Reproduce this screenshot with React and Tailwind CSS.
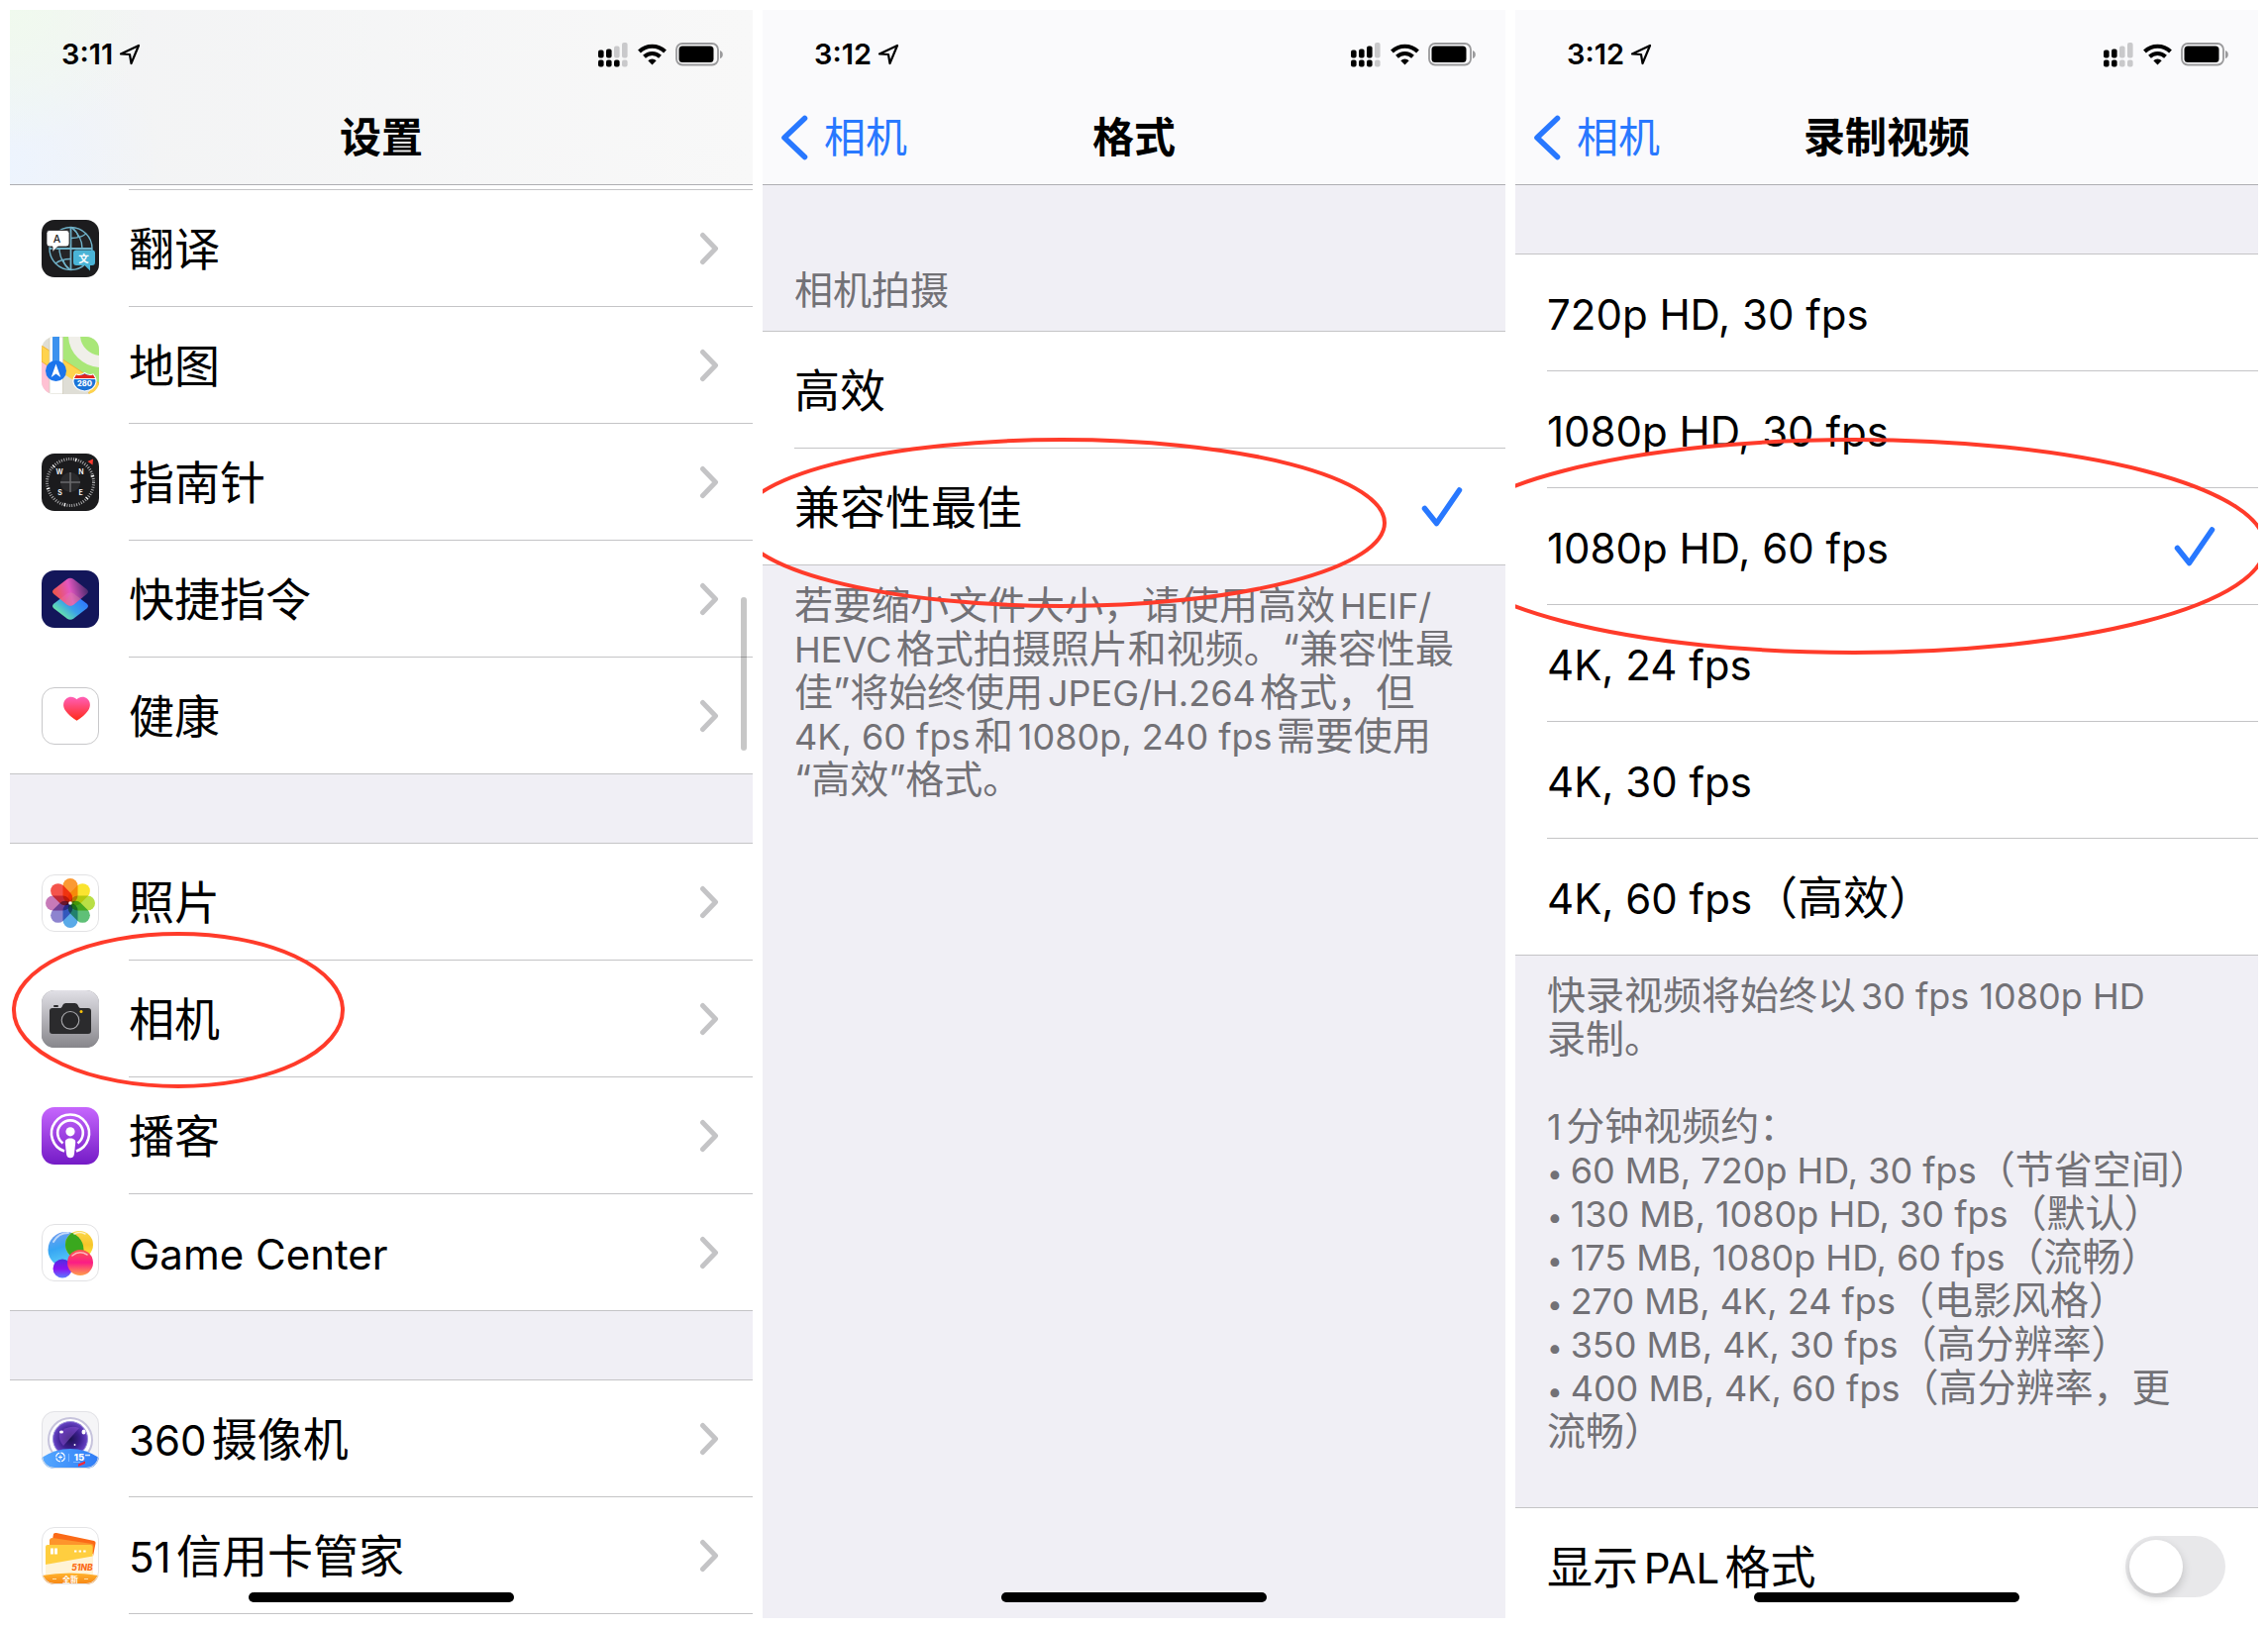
import React, { useId } from "react";
import clsx from "clsx";

/* ---------- app icons (58 x 58) ---------- */

function IconBase({ children, bg = "#ffffff", border }) {
  const id = useId();
  return (
    <svg viewBox="0 0 58 58" className="mt-[2px] h-[58px] w-[58px] shrink-0" aria-hidden="true">
      <defs>
        <clipPath id={id}>
          <rect width="58" height="58" rx="13" />
        </clipPath>
      </defs>
      <g clipPath={`url(#${id})`}>
        <rect width="58" height="58" fill={bg} />
        {children}
      </g>
      {border && <rect x="0.5" y="0.5" width="57" height="57" rx="12.5" fill="none" stroke={border} />}
    </svg>
  );
}

function TranslateIcon() {
  return (
    <IconBase bg="#1c1c1e">
      <circle cx="29.5" cy="29" r="21.5" fill="#242426" />
      <g fill="none" stroke="#6fb2c9" strokeWidth="1.4">
        <circle cx="29.5" cy="29" r="21.5" />
        <path d="M29.5 7.5v43M8 29h43" strokeWidth="1.8" />
        <path d="M30 7.5q11 9 11 21.500M29 50.500q-11-9-11-21.500" />
        <path d="M30 18.500q9 0 15-4.500M29 39.500q-9 0-15 4.500M31 8q5 4 6 9M28 50q-5-4-6-9" />
      </g>
      <path d="M8 10.500h17a3 3 0 0 1 3 3v10.500a3 3 0 0 1-3 3h-8.500l-5.500 5.500v-5.500h-3a3 3 0 0 1-3-3v-10.500a3 3 0 0 1 3-3z" fill="#fff" stroke="#1c1c1e" strokeWidth="0.800" />
      <path d="M35 30.500h16a3 3 0 0 1 3 3v9.500a3 3 0 0 1-3 3h-2v5.500l-5.500-5.500h-8.500a3 3 0 0 1-3-3v-9.500a3 3 0 0 1 3-3z" fill="#4ab4d6" />
      <text x="15.500" y="22.800" fontSize="10.500" textAnchor="middle" fill="#222" fontFamily="Inter, sans-serif" fontWeight="500">A</text>
      <text x="42.500" y="42.500" fontSize="10.500" textAnchor="middle" fill="#fff" fontFamily="Noto Sans CJK SC, sans-serif" fontWeight="700">文</text>
    </IconBase>
  );
}

function MapsIcon() {
  return (
    <IconBase bg="#dfded6">
      <path d="M21 0h37v47L21 24z" fill="#a9e778" />
      <circle cx="60" cy="-2" r="27" fill="none" stroke="#f0efe9" strokeWidth="12" />
      <path d="M0 25l8 5v28h-8z" fill="#ffc1d3" />
      <path d="M0 9l58 38v16l-14-8L0 25z" fill="#ffd34d" stroke="#f2b233" strokeWidth="1" />
      <path d="M21 37l28 17-3 4H21z" fill="#dfded6" />
      <path d="M8 0h13.500v58h-13.500z" fill="#fff" stroke="#cfcdbd" strokeWidth="0.800" />
      <path d="M11 0h7v28h-7z" fill="#3c92ee" />
      <circle cx="14.500" cy="34.500" r="10.500" fill="#1b74ec" />
      <path d="M14.500 27.500l4.800 13.500-4.800-3.500-4.800 3.500z" fill="#fff" />
      <path d="M35 38q4.500 1.500 8.500-1.500 4 3 8.500 1.500 3.500 4 3 8-1.500 8-11.500 9-10-1-11.500-9-.5-4 3-8z" fill="#1b74d8" stroke="#fff" strokeWidth="1.200" />
      <path d="M35 38.500q4.500 1.500 8.500-1 4 2.500 8.500 1l2 3.500H33z" fill="#e2251f" />
      <path d="M33 42.500h21" stroke="#fff" strokeWidth="1" />
      <text x="43.500" y="50" fontSize="7.500" textAnchor="middle" fill="#fff" fontFamily="Inter, sans-serif" fontWeight="800">280</text>
    </IconBase>
  );
}

function CompassIcon() {
  return (
    <IconBase bg="#1b1b1d">
      <circle cx="29" cy="29" r="23.500" fill="none" stroke="#b9b9bb" strokeWidth="3" strokeDasharray="0.900 1.560" />
      <g stroke="#fff" strokeWidth="1.200">
        <path d="M29 4v3.500" transform="rotate(14 29 29)" />
        <path d="M29 4v3.500" transform="rotate(74 29 29)" />
        <path d="M29 4v3.500" transform="rotate(134 29 29)" />
        <path d="M29 4v3.500" transform="rotate(194 29 29)" />
        <path d="M29 4v3.500" transform="rotate(254 29 29)" />
        <path d="M29 4v3.500" transform="rotate(314 29 29)" />
      </g>
      <circle cx="29" cy="29" r="10" fill="#2a2a2c" />
      <path d="M29 19v20M19 29h20" stroke="#6a6a6c" strokeWidth="1.600" />
      <path d="M46.500 8l5.500-2.500-.5 6z" fill="#ff3b30" />
      <g fill="#fff" fontSize="7" fontWeight="600" fontFamily="Inter, sans-serif" textAnchor="middle">
        <text x="18" y="21.200">W</text>
        <text x="40" y="21.200">N</text>
        <text x="18.500" y="42">S</text>
        <text x="39.500" y="42">E</text>
      </g>
    </IconBase>
  );
}

function ShortcutsIcon() {
  const a = useId();
  const b = useId();
  return (
    <IconBase bg="#13165a">
      <defs>
        <linearGradient id={a} x1="0" y1="0.600" x2="1" y2="0.400">
          <stop offset="0" stopColor="#ff5a3c" />
          <stop offset="0.500" stopColor="#f45bc9" />
          <stop offset="1" stopColor="#4a2a6c" />
        </linearGradient>
        <linearGradient id={b} x1="0.200" y1="0.900" x2="0.900" y2="0.300">
          <stop offset="0" stopColor="#6ff0a0" />
          <stop offset="0.500" stopColor="#3aa0e8" />
          <stop offset="1" stopColor="#2f78ff" />
        </linearGradient>
      </defs>
      <path d="M25.500 23.500q3.500-2 7 0l13 10q3 2.500 0 5l-13 10q-3.500 2.500-7 0l-13-10q-3-2.500 0-5z" fill={`url(#${b})`} />
      <path d="M25.500 9q3.500-2.500 7 0l13 10q3 2.500 0 5l-13 10.500q-3.500 2.500-7 0l-13-10.500q-3-2.500 0-5z" fill={`url(#${a})`} fillOpacity="0.920" />
      <path d="M29 22.300q2 0 3.500 1.200l7 5.300-7 5.700q-3.500 2.500-7 0l-2-1.500z" fill="#d8808a" fillOpacity="0.350" />
    </IconBase>
  );
}

function HealthIcon() {
  const id = useId();
  return (
    <IconBase border="#c8c8ca">
      <defs>
        <linearGradient id={id} x1="0" y1="0" x2="0" y2="1">
          <stop offset="0" stopColor="#ff5fb8" />
          <stop offset="1" stopColor="#ff2a17" />
        </linearGradient>
      </defs>
      <path d="M35.500 12.200c2.500-3 7.500-3.500 10.500-.8 3.500 3 3.800 8 1 12-2.500 3.800-7 7.500-11.500 10.300-4.500-2.800-9-6.500-11.500-10.300-2.800-4-2.500-9 1-12 3-2.700 8-2.200 10.500.8z" fill={`url(#${id})`} />
    </IconBase>
  );
}

const petals = ["#fb9a33", "#fae42f", "#b9df45", "#5fc077", "#5aaae8", "#8d84cf", "#c77ab8", "#f4544b"];

function PhotosIcon() {
  return (
    <IconBase border="#e2e2e4">
      {petals.map((color, i) => (
        <rect key={color} x="21.500" y="4" width="15" height="25" rx="7.500" fill={color} transform={`rotate(${i * 45} 29 29)`} className="mix-blend-multiply" />
      ))}
      <circle cx="29" cy="29" r="1.800" fill="#fff" />
    </IconBase>
  );
}

function CameraIcon() {
  const id = useId();
  return (
    <IconBase bg="#8d8c91">
      <defs>
        <linearGradient id={id} x1="0" y1="0" x2="0" y2="1">
          <stop offset="0" stopColor="#e1e0e6" />
          <stop offset="1" stopColor="#87868b" />
        </linearGradient>
      </defs>
      <rect width="58" height="58" fill={`url(#${id})`} />
      <path d="M11 18h7.500q1.500 0 2.200-1.500l.8-1.800q.9-1.700 3-1.700h9q2.100 0 3 1.700l.8 1.800q.7 1.500 2.200 1.500H47q3 0 3 3v20q0 3-3 3H11q-3 0-3-3V21q0-3 3-3z" fill="#2b2b2d" />
      <rect x="12" y="15" width="5" height="2" rx="1" fill="#2b2b2d" />
      <circle cx="29" cy="30.300" r="8.800" fill="#262628" stroke="#a9a9ad" strokeWidth="1.100" />
      <circle cx="40" cy="21.500" r="1.500" fill="#ffc60a" />
    </IconBase>
  );
}

function PodcastsIcon() {
  const id = useId();
  return (
    <IconBase>
      <defs>
        <linearGradient id={id} x1="0" y1="0" x2="0" y2="1">
          <stop offset="0" stopColor="#c666fd" />
          <stop offset="1" stopColor="#741bc6" />
        </linearGradient>
      </defs>
      <rect width="58" height="58" fill={`url(#${id})`} />
      <g fill="none" stroke="#fff" strokeWidth="2.600">
        <path d="M23 44.500a19 19 0 1 1 12 0" />
        <path d="M21.500 36.500a12.800 12.800 0 1 1 15 0" />
      </g>
      <circle cx="29" cy="24.800" r="4.600" fill="#fff" />
      <path d="M29 31.500c3.500 0 5.500 1.500 5.200 4.500l-1.200 11c-.4 3-1.500 4.200-4 4.200s-3.600-1.200-4-4.200l-1.200-11c-.3-3 1.700-4.500 5.200-4.500z" fill="#fff" />
    </IconBase>
  );
}

function GameCenterIcon() {
  const id = useId();
  return (
    <IconBase border="#e2e2e4">
      <defs>
        <linearGradient id={id + "b"} x1="0" y1="0" x2="0.300" y2="1">
          <stop offset="0" stopColor="#7d9cf0" />
          <stop offset="0.500" stopColor="#37a5f3" />
          <stop offset="1" stopColor="#5cd0f8" />
        </linearGradient>
        <linearGradient id={id + "y"} x1="0" y1="0" x2="0" y2="1">
          <stop offset="0" stopColor="#fbd84a" />
          <stop offset="0.500" stopColor="#f7c52a" />
          <stop offset="1" stopColor="#fdf03c" />
        </linearGradient>
        <linearGradient id={id + "p"} x1="0" y1="0" x2="0" y2="1">
          <stop offset="0" stopColor="#fb5a4a" />
          <stop offset="0.500" stopColor="#fb1c86" />
          <stop offset="1" stopColor="#ffa04a" />
        </linearGradient>
        <linearGradient id={id + "v"} x1="0" y1="0" x2="0" y2="1">
          <stop offset="0" stopColor="#4a2fe0" />
          <stop offset="0.500" stopColor="#8a12f0" />
          <stop offset="1" stopColor="#5a7cff" />
        </linearGradient>
        <clipPath id={id + "c"}>
          <circle cx="24.500" cy="26" r="18" />
        </clipPath>
      </defs>
      <circle cx="24.500" cy="26" r="18" fill={`url(#${id}b)`} />
      <circle cx="38" cy="21" r="14" fill={`url(#${id}y)`} />
      <circle cx="38" cy="21" r="14" fill="#3aa81e" clipPath={`url(#${id}c)`} />
      <circle cx="21" cy="45" r="9.500" fill={`url(#${id}v)`} />
      <circle cx="39" cy="39" r="13" fill={`url(#${id}p)`} />
      <path d="M12 18q5-9 15-9" stroke="#fff" strokeOpacity="0.600" strokeWidth="2" fill="none" strokeLinecap="round" />
      <path d="M31 32q7-6 15-1" stroke="#fff" strokeOpacity="0.600" strokeWidth="1.500" fill="none" strokeLinecap="round" />
      <path d="M33 10q5-3 11 0" stroke="#fff" strokeOpacity="0.700" strokeWidth="1.500" fill="none" strokeLinecap="round" />
    </IconBase>
  );
}

function Camera360Icon() {
  const id = useId();
  return (
    <IconBase bg="#f5f5f7" border="#e2e2e6">
      <defs>
        <radialGradient id={id}>
          <stop offset="0" stopColor="#1c1150" />
          <stop offset="0.550" stopColor="#3c1f8e" />
          <stop offset="1" stopColor="#6a45c8" />
        </radialGradient>
        <linearGradient id={id + "w"} x1="0" y1="0" x2="1" y2="0">
          <stop offset="0" stopColor="#55a8ff" />
          <stop offset="1" stopColor="#2f7cf6" />
        </linearGradient>
      </defs>
      <circle cx="29" cy="29" r="22" fill="#fff" stroke="#c6c3dc" strokeWidth="2" />
      <circle cx="29" cy="28" r="17.500" fill={`url(#${id})`} stroke="#9a90d8" strokeWidth="1" />
      <path d="M18 22q9-9 20-5l-16 18q-5-5-4-13z" fill="#9a5ce0" fillOpacity="0.450" />
      <ellipse cx="20" cy="21" rx="2" ry="1.500" fill="#fff" />
      <ellipse cx="42.500" cy="21" rx="2" ry="2.500" fill="#fff" />
      <circle cx="33.500" cy="34" r="0.900" fill="#fff" />
      <path d="M0 47q14-9 29-9t29 9v11H0z" fill={`url(#${id}w)`} />
      <circle cx="19" cy="46.500" r="4.300" fill="none" stroke="#fff" strokeWidth="1.200" strokeDasharray="5.500 1.200" />
      <path d="M17 46.500h4M19 44.500v4" stroke="#fff" strokeWidth="1" />
      <path d="M27.500 43v8M32 51.500h7" stroke="#8fc0ff" strokeWidth="0.800" />
      <text x="38" y="50" fontSize="9.500" textAnchor="middle" fill="#fff" fontFamily="Inter, sans-serif" fontWeight="800">15</text>
      <path d="M44 44.500h5" stroke="#d5e6ff" strokeWidth="1.400" />
      <path d="M37 53.500l7-3v2.500l-7 3z" fill="#f2283a" />
    </IconBase>
  );
}

function Card51Icon() {
  const id = useId();
  return (
    <IconBase border="#e4e4e6">
      <defs>
        <linearGradient id={id} x1="0" y1="0" x2="0" y2="1">
          <stop offset="0" stopColor="#ffb52e" />
          <stop offset="1" stopColor="#f78413" />
        </linearGradient>
      </defs>
      <path d="M12 7q1-1.500 3-1l38 8q2 .5 1.500 2.500l-2.500 13L10 18z" fill="#fb6a17" />
      <path d="M8 13q.5-2 3-2l40 6q2 .5 1.500 2.500L50 36 8 34z" fill="#fd952c" />
      <path d="M4 38l48-11v22H4z" fill="#fff3d6" />
      <path d="M6 18h43q2.500 0 2.500 2.500v9L4 38V20q0-2 2-2z" fill="#ffce3f" />
      <path d="M9 21.500h3v6h-3zM13 21.500h3v6h-3z" fill="#fff" />
      <path d="M33 24.500h12" stroke="#fff" strokeWidth="2.200" strokeDasharray="2.400 2.200" />
      <text x="41" y="43.500" fontSize="8.500" fontStyle="italic" textAnchor="middle" fill="#fb6a17" fontFamily="Inter, sans-serif" fontWeight="800">51NB</text>
      <path d="M0 49q29-5 58 0v9H0z" fill={`url(#${id})`} />
      <text x="29" y="55.500" fontSize="8" textAnchor="middle" fill="#fff" fontFamily="Noto Sans CJK SC, sans-serif" fontWeight="700">全新</text>
      <path d="M11 52.500h4M43 52.500h4" stroke="#ffe0a8" strokeWidth="1" />
    </IconBase>
  );
}

/* ---------- glyphs ---------- */

function ChevronRight() {
  return (
    <svg viewBox="0 0 20 34" className="h-[34px] w-[20px] shrink-0" aria-hidden="true">
      <path d="M3.500 3.500L16.500 17L3.500 30.500" fill="none" stroke="#c4c4c6" strokeWidth="5" strokeLinecap="round" strokeLinejoin="round" />
    </svg>
  );
}

function ChevronLeft() {
  return (
    <svg viewBox="0 0 28 46" className="h-[46px] w-[28px] shrink-0" aria-hidden="true">
      <path d="M24.500 3.500L4 23L24.500 42.500" fill="none" stroke="#2878ff" strokeWidth="5.600" strokeLinecap="round" strokeLinejoin="round" />
    </svg>
  );
}

function CheckMark() {
  return (
    <svg viewBox="0 0 42 40" className="hidden h-[40px] w-[42px] shrink-0 peer-checked:block" aria-hidden="true">
      <path d="M3.500 21.500L15.500 36.500L38.500 3" fill="none" stroke="#2878ff" strokeWidth="5.500" strokeLinecap="round" strokeLinejoin="round" />
    </svg>
  );
}

function LocationArrow() {
  return (
    <svg viewBox="0 0 22 22" className="h-[22px] w-[22px]" aria-hidden="true">
      <path d="M2 10.500L20 2L12.500 20L11 11Z" fill="none" stroke="#000" strokeWidth="2.200" strokeLinejoin="round" />
    </svg>
  );
}

// top / bottom = number of filled bars per SIM
function Signal({ top, bottom }) {
  return (
    <svg viewBox="0 0 31 25" className="h-[25px] w-[31px]" aria-hidden="true">
      {[0, 1, 4, 7.5].map((rise, i) => (
        <React.Fragment key={i}>
          <rect x={i * 8} y={7.5 - rise} width="5.600" height={8 + rise} rx="2" fill={i < top ? "#000" : "#c9c9cb"} />
          <rect x={i * 8} y="17.500" width="5.600" height="7" rx="2" fill={i < bottom ? "#000" : "#c9c9cb"} />
        </React.Fragment>
      ))}
    </svg>
  );
}

function Wifi() {
  return (
    <svg viewBox="0 0 29 22" className="h-[22px] w-[29px]" aria-hidden="true">
      <g fill="none" stroke="#000" strokeWidth="4">
        <path d="M1.500 8a18.500 18.500 0 0 1 26 0" />
        <path d="M6.500 13.300a11.500 11.500 0 0 1 16 0" />
      </g>
      <path d="M10.300 17.300a6 6 0 0 1 8.400 0L14.500 21.500z" fill="#000" />
    </svg>
  );
}

function Battery() {
  return (
    <svg viewBox="0 0 48 24" className="h-[24px] w-[48px]" aria-hidden="true">
      <rect x="1" y="1" width="42" height="21.500" rx="6" fill="none" stroke="#9a9a9c" strokeWidth="1.800" />
      <rect x="3.500" y="3.500" width="35" height="16.500" rx="3.500" fill="#000" />
      <path d="M45 8q2.800 1 2.800 4t-2.800 4z" fill="#9a9a9c" />
    </svg>
  );
}

/* ---------- shared pieces ---------- */

// Latin runs are set a little smaller than the Chinese text around them
function Mixed({ text, latin = "text-[42px]" }) {
  return text.split(/([\x20-\x7e]+)/).map((part, i) =>
    i % 2 ? (
      <span key={i} className={clsx("leading-none", latin)}>
        {part}
      </span>
    ) : (
      part
    )
  );
}

function Lines({ lines, bullet }) {
  return lines.map((line, i) => (
    <span key={line} className="block">
      {bullet && i === 0 && <span className="text-[28px] leading-none">• </span>}
      <Mixed text={line} latin="text-[36px]" />
    </span>
  ));
}

function Screen({ children }) {
  return (
    <section className="relative flex min-w-0 flex-1 flex-col overflow-hidden bg-[#f0eff5]">
      {children}
      <div className="absolute bottom-[16px] left-1/2 h-[10px] w-[268px] -translate-x-1/2 rounded-full bg-black" />
    </section>
  );
}

function Header({ time, title, back, signal, className }) {
  return (
    <header className={clsx("shrink-0 border-b border-[#aeaeb2] pb-[8px]", className)}>
      <div className="flex h-[90px] items-center justify-between pr-[30px] pl-[52px]">
        <div className="flex items-center gap-[6px]">
          <span className="text-[29px] font-semibold">{time}</span>
          <LocationArrow />
        </div>
        <div className="flex items-center gap-[9px]">
          <Signal top={signal[0]} bottom={signal[1]} />
          <Wifi />
          <Battery />
        </div>
      </div>
      <div className="grid h-[78px] grid-cols-3 items-center text-[42px]">
        <div>
          {back && (
            <a href="#camera" className="flex items-center gap-[16px] pl-[18px] text-[#2878ff]">
              <ChevronLeft />
              {back}
            </a>
          )}
        </div>
        <h1 className="text-center font-bold whitespace-nowrap">{title}</h1>
      </div>
    </header>
  );
}

function SettingRow({ icon, label, first, children }) {
  return (
    <a href="#row" className={clsx("relative flex h-[118px] shrink-0 items-center gap-[30px] bg-white pl-[32px]", first && "border-t border-[#c4c4c6]")}>
      {icon}
      <span className={clsx("flex h-full flex-1 items-center justify-between pr-[34px]", !first && "border-t border-[#c4c4c6]")}>
        <span>
          <Mixed text={label} />
        </span>
        <ChevronRight />
      </span>
      {children}
    </a>
  );
}

function OptionRow({ name, label, first, checked, children }) {
  return (
    <label className={clsx("relative flex h-[118px] shrink-0 bg-white pl-[32px]", first && "border-t border-[#c4c4c6]")}>
      <span className={clsx("flex flex-1 items-center pr-[43px]", !first && "border-t border-[#c4c4c6]")}>
        <input type="radio" name={name} defaultChecked={checked} className="peer appearance-none" />
        <span className="flex-1">
          <Mixed text={label} />
        </span>
        <CheckMark />
      </span>
      {children}
    </label>
  );
}

function Circle({ className, w, h }) {
  return (
    <svg viewBox={`0 0 ${w} ${h}`} className={clsx("pointer-events-none absolute z-10 max-w-none", className)} aria-hidden="true">
      <ellipse cx={w / 2} cy={h / 2} rx={w / 2 - 2} ry={h / 2 - 2} fill="none" stroke="#ff3b2a" strokeWidth="4" />
    </svg>
  );
}

/* ---------- screens ---------- */

const firstGroup = [
  { label: "翻译", icon: <TranslateIcon /> },
  { label: "地图", icon: <MapsIcon /> },
  { label: "指南针", icon: <CompassIcon /> },
  { label: "快捷指令", icon: <ShortcutsIcon /> },
  { label: "健康", icon: <HealthIcon /> },
];

const groups = [
  [
    { label: "照片", icon: <PhotosIcon /> },
    { label: "相机", icon: <CameraIcon />, circled: true },
    { label: "播客", icon: <PodcastsIcon /> },
    { label: "Game Center", icon: <GameCenterIcon /> },
  ],
  [
    { label: "360摄像机", icon: <Camera360Icon /> },
    { label: "51信用卡管家", icon: <Card51Icon /> },
  ],
];

function SettingsScreen() {
  return (
    <Screen>
      <Header
        time="3:11"
        title="设置"
        signal={[2, 3]}
        className="bg-[radial-gradient(circle_at_0%_0%,#f0faee_0%,transparent_18%),radial-gradient(circle_at_0%_90%,#edf4fe_0%,transparent_20%),linear-gradient(to_right,#f2f3f4,#f8f8f8)]"
      />
      <div className="h-[4px] shrink-0 bg-white" />
      {firstGroup.map((item) => (
        <SettingRow key={item.label} {...item} />
      ))}
      {groups.map((items, g) => (
        <React.Fragment key={g}>
          <div className="h-[70px] shrink-0 border-t border-[#c4c4c6]" />
          {items.map((item, i) => (
            <SettingRow key={item.label} icon={item.icon} label={item.label} first={i === 0}>
              {item.circled && <Circle w={336} h={158} className="top-[-28px] left-[2px] h-[158px] w-[336px]" />}
            </SettingRow>
          ))}
        </React.Fragment>
      ))}
      <div className="flex-1 bg-white pl-[120px]">
        <div className="border-t border-[#c4c4c6]" />
      </div>
      <div className="absolute top-[593px] right-[6px] h-[155px] w-[6px] rounded-full bg-black/22" />
    </Screen>
  );
}

const formatNote = [
  "若要缩小文件大小，请使用高效HEIF/",
  "HEVC格式拍摄照片和视频。“兼容性最",
  "佳”将始终使用JPEG/H.264格式，但",
  "4K, 60 fps和1080p, 240 fps需要使用",
  "“高效”格式。",
];

function FormatScreen() {
  return (
    <Screen>
      <Header time="3:12" title="格式" back="相机" signal={[3, 3]} className="bg-[#fafafc]" />
      <h2 className="shrink-0 px-[32px] pt-[84px] pb-[19px] text-[39px] leading-[44px] text-[#727176]">相机拍摄</h2>
      <OptionRow name="format" label="高效" first />
      <OptionRow name="format" label="兼容性最佳" checked>
        <Circle w={656} h={172} className="top-[-10px] left-[-26px] h-[172px] w-[656px]" />
      </OptionRow>
      <p className="border-t border-[#c4c4c6] px-[32px] pt-[18px] text-[39px] leading-[44px] whitespace-nowrap text-[#727176]">
        <Lines lines={formatNote} />
      </p>
    </Screen>
  );
}

const sizes = [
  ["60 MB, 720p HD, 30 fps（节省空间）"],
  ["130 MB, 1080p HD, 30 fps（默认）"],
  ["175 MB, 1080p HD, 60 fps（流畅）"],
  ["270 MB, 4K, 24 fps（电影风格）"],
  ["350 MB, 4K, 30 fps（高分辨率）"],
  ["400 MB, 4K, 60 fps（高分辨率，更", "流畅）"],
];

function VideoScreen() {
  return (
    <Screen>
      <Header time="3:12" title="录制视频" back="相机" signal={[2, 2]} className="bg-[#fafafc]" />
      <div className="h-[69px] shrink-0" />
      <OptionRow name="video" label="720p HD, 30 fps" first />
      <OptionRow name="video" label="1080p HD, 30 fps" />
      <OptionRow name="video" label="1080p HD, 60 fps" checked>
        <Circle w={834} h={219} className="top-[-50px] left-[-75px] h-[219px] w-[834px]" />
      </OptionRow>
      <OptionRow name="video" label="4K, 24 fps" />
      <OptionRow name="video" label="4K, 30 fps" />
      <OptionRow name="video" label="4K, 60 fps（高效）" />
      <div className="shrink-0 border-t border-[#c4c4c6] px-[32px] pt-[18px] pb-[55px] text-[39px] leading-[44px] whitespace-nowrap text-[#727176]">
        <p>
          <Lines lines={["快录视频将始终以30 fps 1080p HD", "录制。"]} />
        </p>
        <p className="pt-[44px]">
          <Lines lines={["1分钟视频约："]} />
        </p>
        <ul>
          {sizes.map((lines) => (
            <li key={lines[0]}>
              <Lines lines={lines} bullet />
            </li>
          ))}
        </ul>
      </div>
      <div className="flex h-[118px] shrink-0 items-center justify-between border-t border-[#c4c4c6] bg-white pr-[33px] pl-[32px]">
        <label htmlFor="pal">
          <Mixed text="显示PAL格式" />
        </label>
        <input
          id="pal"
          type="checkbox"
          role="switch"
          className="h-[62px] w-[101px] appearance-none rounded-full bg-[#e8e8ea] p-[4px] before:block before:size-[54px] before:rounded-full before:bg-white before:shadow-[0_4px_10px_rgba(0,0,0,0.18)] checked:bg-green-500 checked:before:ml-auto"
        />
      </div>
    </Screen>
  );
}

export default function App() {
  return (
    <main lang="zh-CN" className="flex h-screen gap-[10px] bg-white p-[10px] font-['Inter','Noto_Sans_CJK_SC',sans-serif] text-[46px] leading-[60px] text-black [text-autospace:normal]">
      <SettingsScreen />
      <FormatScreen />
      <VideoScreen />
    </main>
  );
}
